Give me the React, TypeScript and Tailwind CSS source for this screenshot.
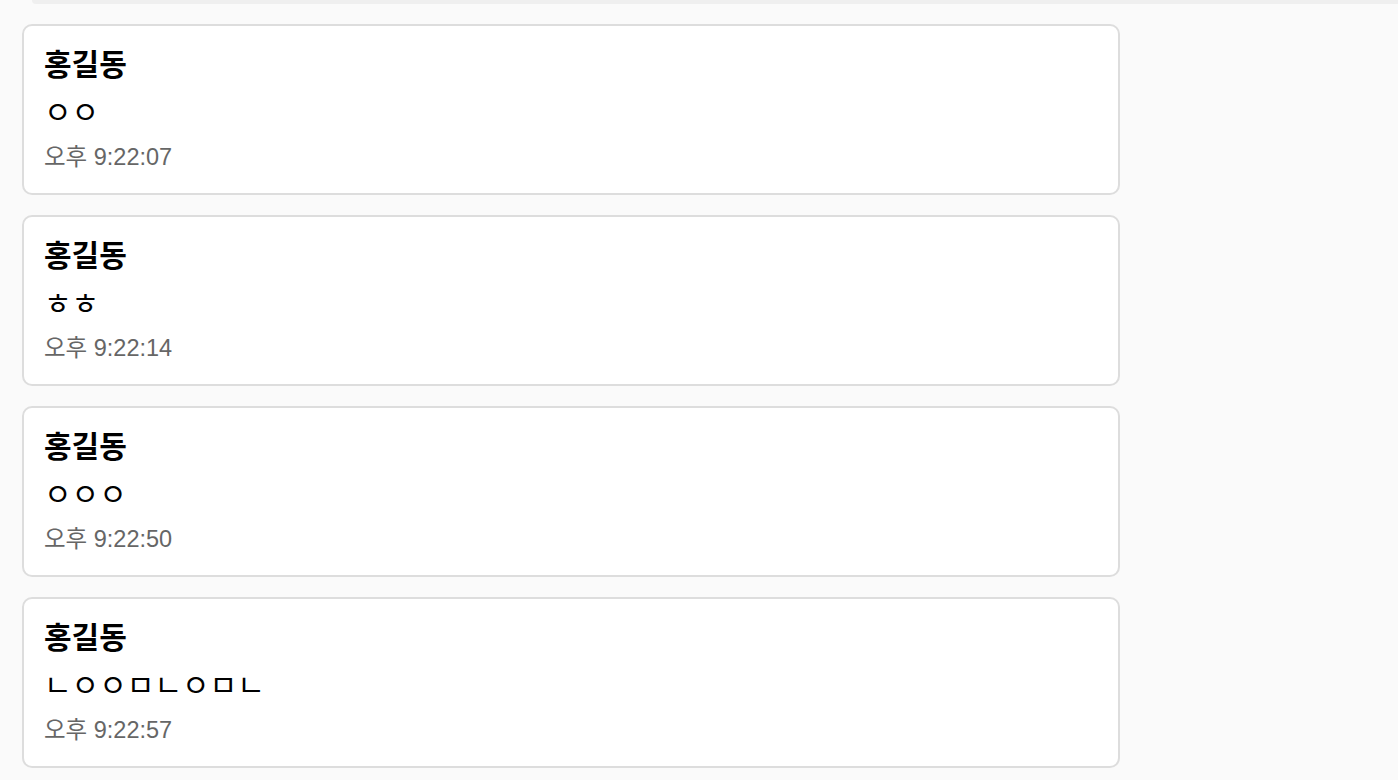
import React from "react";

const msgs = [
  { name: "홍길동", text: "ㅇㅇ", time: "오후 9:22:07" },
  { name: "홍길동", text: "ㅎㅎ", time: "오후 9:22:14" },
  { name: "홍길동", text: "ㅇㅇㅇ", time: "오후 9:22:50" },
  { name: "홍길동", text: "ㄴㅇㅇㅁㄴㅇㅁㄴ", time: "오후 9:22:57" },
];

export default function App() {
  return (
    <div
      className="min-h-screen bg-[#fafafa]"
      style={{ fontFamily: '"Liberation Sans", "Noto Sans CJK KR", sans-serif' }}
    >
      <div className="h-[4px] ml-[32px] bg-[#efefef] rounded-bl-[10px]" />
      <div className="flex flex-col gap-[20px] pl-[22px] pt-[20px]">
        {msgs.map((m, i) => (
          <div
            key={i}
            className="w-[1098px] h-[171px] bg-white border-2 border-[#dddddd] rounded-[10px] px-[20px] pt-[19px]"
          >
            <div className="text-[30px] font-bold leading-[40px] text-black">{m.name}</div>
            <div className="text-[30px] leading-[40px] text-black mt-[8px]">{m.text}</div>
            <div className="text-[23.5px] leading-[30px] text-[#666666] mt-[9px]">{m.time}</div>
          </div>
        ))}
      </div>
    </div>
  );
}
